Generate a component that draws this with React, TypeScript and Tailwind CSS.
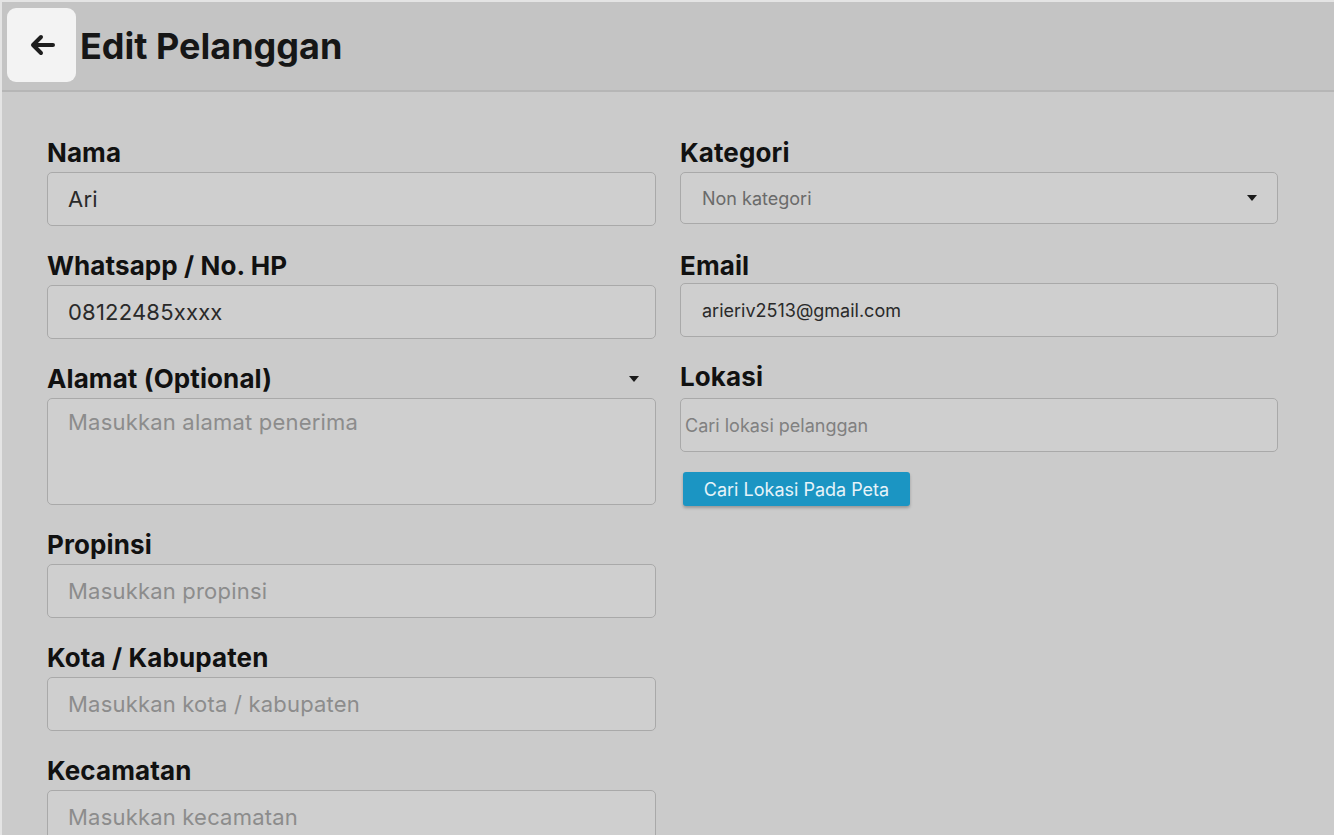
import React from 'react';

const labelCls = "block h-[30px] text-[26px] leading-[30px] font-bold text-[#111] font-['Inter',sans-serif] tracking-[0.1px]";
const inputCls =
    "w-full h-[54px] rounded-[5px] border border-[#a9a9a9] bg-[#cfcfcf] px-[20px] text-[22px] text-[#2a2a2a] placeholder:text-[#8c8c8c] font-['Inter',sans-serif] tracking-[0.2px] outline-none";

function Caret({ className = '' }: { className?: string }) {
    return (
        <svg width="10" height="6" viewBox="0 0 10 6" className={className}>
            <path d="M0 0h10L5 6z" fill="#1a1a1a" />
        </svg>
    );
}

function Field({ label, value, placeholder }: { label: string; value?: string; placeholder?: string }) {
    return (
        <div className="mb-[25px]">
            <label className={labelCls + ' mb-[4px]'}>{label}</label>
            <input className={inputCls} defaultValue={value} placeholder={placeholder} />
        </div>
    );
}

export default function App() {
    return (
        <div className="w-[1334px] h-[835px] overflow-hidden bg-[#cbcbcb] border-l-2 border-t-2 border-[#e4e4e4]">
            {/* Header */}
            <div className="h-[90px] bg-[#c4c4c4] border-b-2 border-[#b6b6b6] flex items-start gap-[4px] pl-[5px] pt-[6px]">
                <button className="w-[69px] h-[74px] rounded-[9px] bg-[#f3f3f3] flex items-center justify-center">
                    <svg width="26" height="22" viewBox="0 0 26 22">
                        <path d="M12 3L4 11l8 8M4 11h20" fill="none" stroke="#1e1e1e" strokeWidth="4" strokeLinecap="round" strokeLinejoin="round" />
                    </svg>
                </button>
                <h1 className="mt-[16px] text-[36px] leading-[44px] font-bold text-[#161616] font-['Inter',sans-serif]">Edit Pelanggan</h1>
            </div>

            {/* Form */}
            <div className="flex gap-[24px] pl-[45px] pt-[46px]">
                <div className="w-[609px] shrink-0">
                    <Field label="Nama" value="Ari" />
                    <Field label="Whatsapp / No. HP" value="08122485xxxx" />
                    <div className="mb-[25px]">
                        <div className="flex items-center justify-between mb-[4px]">
                            <label className={labelCls}>Alamat (Optional)</label>
                            <Caret className="mr-[17px]" />
                        </div>
                        <textarea
                            className={inputCls + ' h-[107px] pt-[7px] resize-none block'}
                            placeholder="Masukkan alamat penerima"
                        />
                    </div>
                    <Field label="Propinsi" placeholder="Masukkan propinsi" />
                    <Field label="Kota / Kabupaten" placeholder="Masukkan kota / kabupaten" />
                    <Field label="Kecamatan" placeholder="Masukkan kecamatan" />
                </div>

                <div className="w-[598px] shrink-0">
                    <div className="mb-[27px]">
                        <label className={labelCls + ' mb-[4px]'}>Kategori</label>
                        <div className="h-[52px] rounded-[5px] border border-[#a9a9a9] bg-[#cfcfcf] flex items-center justify-between pl-[21px] pr-[20px]">
                            <span className="text-[18px] text-[#6a6a6a] font-['Inter',sans-serif]">Non kategori</span>
                            <Caret />
                        </div>
                    </div>
                    <div className="mb-[25px]">
                        <label className={labelCls + ' mb-[2px]'}>Email</label>
                        <input
                            className="w-full h-[54px] rounded-[5px] border border-[#a9a9a9] bg-[#cfcfcf] px-[21px] text-[18px] text-[#2a2a2a] font-['Inter',sans-serif] outline-none"
                            defaultValue="arieriv2513@gmail.com"
                        />
                    </div>
                    <div>
                        <label className={labelCls + ' mb-[6px]'}>Lokasi</label>
                        <input
                            className="w-full h-[54px] rounded-[5px] border border-[#a9a9a9] bg-[#cfcfcf] px-[4px] text-[18px] text-[#2a2a2a] placeholder:text-[#808080] font-['Inter',sans-serif] outline-none"
                            placeholder="Cari lokasi pelanggan"
                        />
                        <button className="mt-[20px] ml-[3px] w-[227px] h-[34px] rounded-[3px] bg-[#1b95c3] text-[#e6f3f9] text-[18px] font-['Inter',sans-serif] shadow-[0_2px_3px_rgba(0,0,0,0.25)]">
                            Cari Lokasi Pada Peta
                        </button>
                    </div>
                </div>
            </div>
        </div>
    );
}
